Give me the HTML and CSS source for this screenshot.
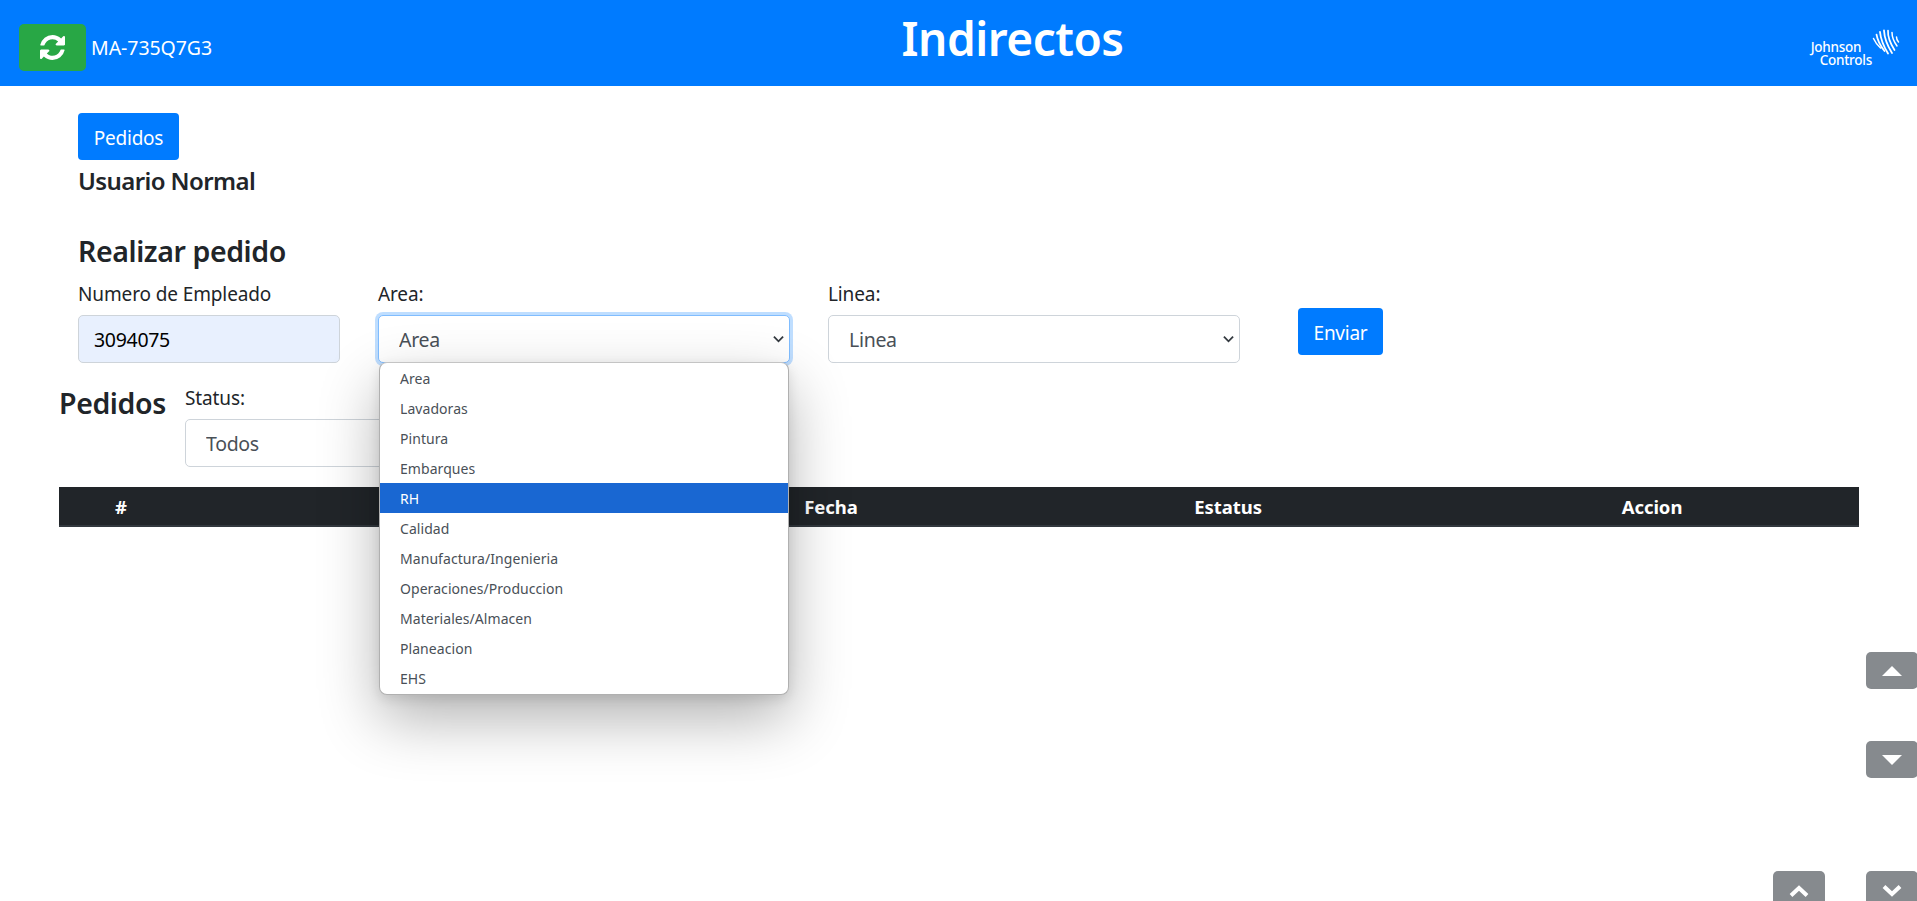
FILE: index.html
```html
<!DOCTYPE html>
<html lang="es">
<head>
<meta charset="utf-8">
<title>Indirectos</title>
<link rel="stylesheet" href="styles.css">
</head>
<body>
<header class="topbar">
  <div class="topbar-left">
    <button class="btn-refresh" type="button" aria-label="Actualizar">
      <svg class="refresh-icon" viewBox="0 0 1536 1536"><path fill="currentColor" d="M1511 928q0 5-1 7-64 268-268 434.5t-478 166.5q-146 0-282.5-55t-243.5-157l-129 129q-19 19-45 19t-45-19-19-45v-448q0-26 19-45t45-19h448q26 0 45 19t19 45-19 45l-137 137q71 66 161 102t187 36q134 0 250-65t186-179q11-17 53-117 8-23 30-23h192q13 0 22.5 9.5t9.5 22.5zm25-800v448q0 26-19 45t-45 19h-448q-26 0-45-19t-19-45 19-45l138-138q-148-137-349-137-134 0-250 65t-186 179q-11 17-53 117-8 23-30 23h-199q-13 0-22.5-9.5t-9.5-22.5v-7q65-268 270-434.5t480-166.5q146 0 284 55.5t245 156.5l130-129q19-19 45-19t45 19 19 45z"/></svg>
    </button>
    <span class="device">MA-735Q7G3</span>
  </div>
  <h1 class="title">Indirectos</h1>
  <div class="logo">
    <div class="logo-text"><span>Johnson</span><span class="logo-second">Controls</span></div>
    <svg class="logo-mark" viewBox="0 0 28 28" fill="none" stroke="#fff" stroke-linecap="round">
      <path stroke-width="1.5" d="M1.5 9.5 Q4 15 8.5 19"/>
      <path stroke-width="1.7" d="M4.5 5.5 Q6 14 12.5 22"/>
      <path stroke-width="1.8" d="M8 3 Q9 13 16 24.5"/>
      <path stroke-width="1.8" d="M12 1.5 Q12.5 12 20 24"/>
      <path stroke-width="1.7" d="M16 1.5 Q15.5 10 22.5 21"/>
      <path stroke-width="1.5" d="M20 3.5 Q20 10 25 17"/>
      <path stroke-width="1.5" d="M24.5 8 Q24.5 11 26.5 13"/>
    </svg>
  </div>
</header>

<main class="page">
  <section class="intro">
    <button class="btn btn-primary" type="button">Pedidos</button>
    <h4 class="user-type">Usuario Normal</h4>
    <h3 class="section-title">Realizar pedido</h3>
    <form class="order-form">
      <div class="field field-number">
        <label class="field-label">Numero de Empleado</label>
        <input class="control control-autofill" type="text" value="3094075">
      </div>
      <div class="field field-wide">
        <label class="field-label">Area:</label>
        <select class="control control-select control-focus"><option>Area</option></select>
        <ul class="dropdown">
          <li>Area</li>
          <li>Lavadoras</li>
          <li>Pintura</li>
          <li>Embarques</li>
          <li class="is-active">RH</li>
          <li>Calidad</li>
          <li>Manufactura/Ingenieria</li>
          <li>Operaciones/Produccion</li>
          <li>Materiales/Almacen</li>
          <li>Planeacion</li>
          <li>EHS</li>
        </ul>
      </div>
      <div class="field field-wide">
        <label class="field-label">Linea:</label>
        <select class="control control-select"><option>Linea</option></select>
      </div>
      <button class="btn btn-primary btn-send" type="button">Enviar</button>
    </form>
  </section>

  <section class="orders">
    <div class="orders-head">
      <h2 class="orders-title">Pedidos</h2>
      <div class="field field-status">
        <label class="field-label">Status:</label>
        <select class="control control-select"><option>Todos</option></select>
      </div>
    </div>
    <table class="orders-table">
      <thead>
        <tr>
          <th class="col-id">#</th>
          <th class="col-name"></th>
          <th class="col-date">Fecha</th>
          <th class="col-status">Estatus</th>
          <th class="col-action">Accion</th>
        </tr>
      </thead>
    </table>
  </section>
</main>

<button class="scroll-btn scroll-up" type="button" aria-label="Subir">
  <svg viewBox="0 0 20 10" class="caret"><path fill="#fff" d="M10 0 20 10H0z"/></svg>
</button>
<button class="scroll-btn scroll-down" type="button" aria-label="Bajar">
  <svg viewBox="0 0 20 10" class="caret"><path fill="#fff" d="M0 0H20L10 10z"/></svg>
</button>
<button class="scroll-btn page-up" type="button" aria-label="Inicio">
  <svg viewBox="0 0 20 12" class="chevron"><path fill="none" stroke="#fff" stroke-width="4" d="M2 10.5 10 3l8 7.5"/></svg>
</button>
<button class="scroll-btn page-down" type="button" aria-label="Fin">
  <svg viewBox="0 0 20 12" class="chevron"><path fill="none" stroke="#fff" stroke-width="4" d="M2 1.5 10 9l8-7.5"/></svg>
</button>
</body>
</html>
```

FILE: styles.css
```css
* { box-sizing: border-box; }

html, body {
  height: 100%;
  overflow: hidden;
}

body {
  margin: 0;
  background: #fff;
  color: #212529;
  font-family: "Noto Sans", "Open Sans", Arial, sans-serif;
  font-size: 20px;
  line-height: 1.5;
}

.topbar {
  position: relative;
  display: flex;
  align-items: center;
  justify-content: space-between;
  height: 86px;
  padding: 0 0 0 19px;
  background: #007bff;
  color: #fff;
}

.topbar-left {
  display: flex;
  align-items: center;
  gap: 5px;
  margin-top: 9px;
}

.btn-refresh {
  display: flex;
  align-items: center;
  justify-content: center;
  width: 67px;
  height: 47px;
  padding: 0;
  border: 0;
  border-radius: 5px;
  background: #28a745;
  color: #fff;
}

.refresh-icon { width: 25px; height: 25px; }

.device {
  font-size: 19.5px;
  letter-spacing: -0.05px;
}

.title {
  position: absolute;
  left: 0;
  right: 0;
  top: 4px;
  margin: 0;
  padding-left: 108px;
  text-align: center;
  font-size: 46px;
  font-weight: 600;
  line-height: 1.5;
  letter-spacing: -0.5px;
}

.logo {
  display: flex;
  align-items: flex-start;
  margin: 29px 17px 0 0;
  height: 57px;
}

.logo-text {
  display: flex;
  flex-direction: column;
  margin-top: 12px;
  font-size: 13.5px;
  line-height: 13px;
  font-weight: 500;
  letter-spacing: -0.25px;
}

.logo-second { margin-left: 9px; }

.logo-mark { width: 28px; height: 28px; flex: none; }

.intro { padding: 27px 0 0 78px; }

.btn {
  display: block;
  height: 47px;
  padding-top: 2px;
  border: 0;
  border-radius: 4px;
  font-family: inherit;
  font-size: 19px;
  letter-spacing: -0.25px;
  color: #fff;
}

.btn-primary { background: #007bff; }

.intro > .btn { width: 101px; padding: 2px 0 0; }

.user-type {
  margin: 3px 0 0;
  font-size: 24px;
  font-weight: 600;
  line-height: 36px;
  letter-spacing: -0.6px;
}

.section-title {
  margin: 31px 0 0;
  font-size: 28.5px;
  font-weight: 600;
  line-height: 42px;
  letter-spacing: -0.4px;
}

.order-form {
  display: flex;
  align-items: flex-start;
  gap: 38px;
  margin-top: 8px;
}

.field { position: relative; }
.field-number { width: 262px; }
.field-wide { width: 412px; }

.field-label {
  display: block;
  margin-bottom: 7px;
  font-size: 19px;
  line-height: 28px;
  letter-spacing: -0.12px;
}

.control {
  display: block;
  width: 100%;
  height: 48px;
  padding: 0 15px;
  border: 1px solid #ced4da;
  border-radius: 5px;
  background: #fff;
  color: #495057;
  font-family: inherit;
  font-size: 19.5px;
  letter-spacing: -0.3px;
}

.control-autofill {
  background: #e8f0fe;
  color: #000;
}

.control-select {
  padding-left: 20px;
  appearance: none;
  background-image: url("data:image/svg+xml,%3Csvg xmlns='http://www.w3.org/2000/svg' viewBox='0 0 12 8'%3E%3Cpath fill='none' stroke='%23343a40' stroke-width='2' d='M1 1.5 6 6.5l5-5'/%3E%3C/svg%3E");
  background-repeat: no-repeat;
  background-position: right 5px center;
  background-size: 11px 8px;
}

.control-focus {
  border-color: #80bdff;
  box-shadow: 0 0 0 3px rgba(0, 123, 255, 0.25);
}

.dropdown {
  position: absolute;
  left: 1px;
  top: 82px;
  z-index: 5;
  width: 410px;
  height: 333px;
  margin: 0;
  padding: 0;
  overflow: hidden;
  list-style: none;
  border: 1px solid #b0b0b0;
  border-top-color: #c4c4c4;
  border-radius: 8px;
  background: #fff;
  box-shadow: 0 24px 60px rgba(0, 0, 0, 0.3), 0 4px 12px rgba(0, 0, 0, 0.1);
  color: #495057;
  font-size: 14px;
  line-height: 32px;
  letter-spacing: 0.06px;
}

.dropdown li { height: 30px; padding-left: 20px; }

.dropdown .is-active {
  background: #1967d2;
  color: #fff;
}

.btn-send {
  width: 85px;
  margin: 28px 0 0 20px;
  padding: 2px 0 0;
}

.orders { padding: 0 58px 0 59px; }

.orders-head {
  display: flex;
  align-items: flex-start;
  margin-top: 19px;
}

.orders-title {
  margin: 0;
  width: 126px;
  font-size: 28.5px;
  font-weight: 600;
  line-height: 42px;
  letter-spacing: -0.4px;
}

.field-status { width: 412px; margin-top: 2px; }
.field-status .field-label { margin-bottom: 7px; }

.orders-table {
  width: 100%;
  margin-top: 20px;
  border-collapse: collapse;
  table-layout: fixed;
}

.orders-table th {
  height: 39px;
  padding: 1px 0 0;
  background: #212529;
  border-bottom: 2px solid #32383e;
  color: #fff;
  font-size: 18.5px;
  font-weight: 700;
  text-align: center;
  letter-spacing: -0.05px;
}

.col-id { width: 124px; }
.col-name { width: 468px; }
.col-date { width: 360px; }
.col-status { width: 434px; }

.scroll-btn {
  position: fixed;
  display: flex;
  align-items: center;
  justify-content: center;
  width: 52px;
  height: 37px;
  padding: 0;
  border: 0;
  border-radius: 5px;
  background: #868a8e;
}

.scroll-up { right: -1px; top: 652px; }
.scroll-down { right: -1px; top: 741px; }

.page-up, .page-down {
  top: 871px;
  align-items: flex-start;
  padding-top: 14px;
}

.page-up { right: 92px; }
.page-down { right: -1px; }

.caret { width: 20px; height: 10px; }
.chevron { width: 20px; height: 12px; }
```
